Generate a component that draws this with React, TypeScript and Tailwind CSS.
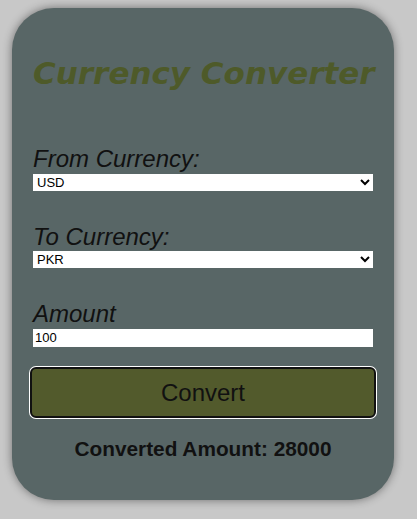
import React, { useState } from 'react';

const rates: Record<string, number> = { USD: 280, PKR: 1, EUR: 300, GBP: 350 };

const App = () => {
  const [from, setFrom] = useState('USD');
  const [to, setTo] = useState('PKR');
  const [amount, setAmount] = useState('100');
  const [result, setResult] = useState(28000);

  const convert = () => {
    const value = (parseFloat(amount) || 0) * (rates[from] / rates[to]);
    setResult(Math.round(value * 100) / 100);
  };

  return (
    <div className="min-h-screen bg-[#c8c8c8] pt-[8px] pl-[12px] font-['Liberation_Sans',Arial,sans-serif]">
      <div className="w-[382px] h-[492px] rounded-[42px] bg-[#586666] shadow-[0_0_10px_rgba(0,0,0,0.45)] px-[21px] flex flex-col">
        <h1 className="mt-[47px] font-['DejaVu_Sans',sans-serif] text-[31px] leading-[36px] font-bold italic text-[#4e5a29] text-center whitespace-nowrap">
          Currency Converter
        </h1>

        <label className="mt-[54px] text-[24px] leading-[28px] italic text-[#111]">From Currency:</label>
        <select
          value={from}
          onChange={(e) => setFrom(e.target.value)}
          className="mt-px h-[17px] w-full bg-white text-[13px] leading-none text-black"
        >
          <option>USD</option>
          <option>PKR</option>
          <option>EUR</option>
          <option>GBP</option>
        </select>

        <label className="mt-[32px] text-[24px] leading-[28px] italic text-[#111]">To Currency:</label>
        <select
          value={to}
          onChange={(e) => setTo(e.target.value)}
          className="h-[17px] w-full bg-white text-[13px] leading-none text-black"
        >
          <option>USD</option>
          <option>PKR</option>
          <option>EUR</option>
          <option>GBP</option>
        </select>

        <label className="mt-[32px] text-[24px] leading-[28px] italic text-[#111]">Amount</label>
        <input
          value={amount}
          onChange={(e) => setAmount(e.target.value)}
          className="mt-px h-[18px] w-full bg-white px-[2px] text-[13px] text-black outline-none"
        />

        <button
          onClick={convert}
          className="mt-[20px] -mx-[3px] h-[51px] rounded-[6px] border-2 border-[#111] bg-[#525a2c] text-[24px] text-[#111] shadow-[0_0_0_1px_#fff]"
        >
          Convert
        </button>

        <p className="mt-[15px] text-center text-[20.8px] font-bold text-[#111]">Converted Amount: {result}</p>
      </div>
    </div>
  );
};

export default App;
